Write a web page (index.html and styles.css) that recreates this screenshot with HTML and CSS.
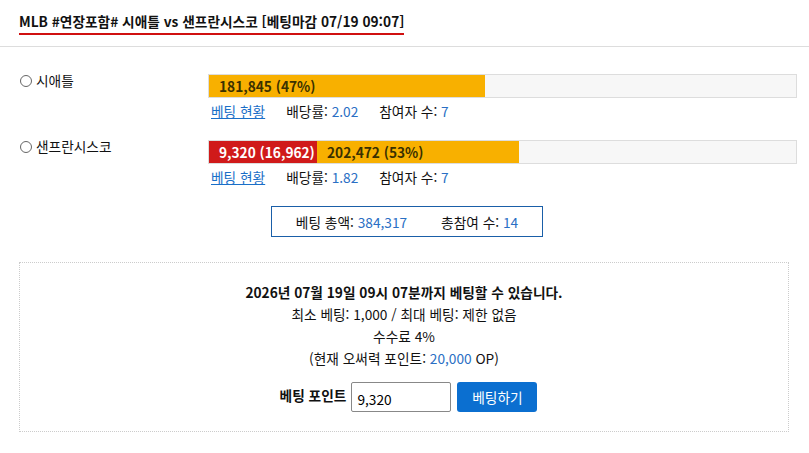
FILE: index.html
```html
<!DOCTYPE html>
<html lang="ko">

<head>
    <meta charset="UTF-8">
    <meta name="viewport" content="width=device-width, initial-scale=1.0">
    <title>MLB 베팅</title>
    <link rel="stylesheet" href="styles.css">
</head>

<body>
    <header class="head">
        <h3 class="title">MLB #연장포함# 시애틀 vs 샌프란시스코 [베팅마감 07/19 09:07]</h3>
    </header>

    <section class="options">
        <div class="option">
            <label class="pick"><span class="radio"></span>시애틀</label>
            <div class="info">
                <div class="bar">
                    <div class="fill orange" style="width: 47%">181,845 (47%)</div>
                </div>
                <div class="stats">
                    <a href="#">베팅 현황</a>
                    <span>배당률: <em>2.02</em></span>
                    <span>참여자 수: <em>7</em></span>
                </div>
            </div>
        </div>
        <div class="option">
            <label class="pick"><span class="radio"></span>샌프란시스코</label>
            <div class="info">
                <div class="bar">
                    <div class="fill red" style="width: 18.4%">9,320 (16,962)</div>
                    <div class="fill orange" style="width: 34.4%">202,472 (53%)</div>
                </div>
                <div class="stats">
                    <a href="#">베팅 현황</a>
                    <span>배당률: <em>1.82</em></span>
                    <span>참여자 수: <em>7</em></span>
                </div>
            </div>
        </div>
    </section>

    <div class="total">
        <span>베팅 총액: <em>384,317</em></span>
        <span>총참여 수: <em>14</em></span>
    </div>

    <section class="betbox">
        <p class="deadline">2026년 07월 19일 09시 07분까지 베팅할 수 있습니다.</p>
        <p>최소 베팅: 1,000 / 최대 베팅: 제한 없음</p>
        <p>수수료 4%</p>
        <p>(현재 오써력 포인트: <em>20,000</em> OP)</p>
        <div class="form">
            <span class="form-label">베팅 포인트</span>
            <input type="text" value="9,320">
            <button>베팅하기</button>
        </div>
    </section>
</body>

</html>
```

FILE: styles.css
```css
* {
    padding: 0;
    margin: 0;
    box-sizing: border-box;
}

body {
    font-family: "Noto Sans CJK KR", "Noto Sans", sans-serif;
    font-size: 13.7px;
    line-height: 18px;
    color: #111;
    background: #fff;
}

em {
    font-style: normal;
    color: #2a6fc4;
}

.head {
    padding: 11px 19px 0;
    border-bottom: 1px solid #ddd;
    height: 47px;
}

.title {
    display: inline-block;
    font-size: 13.7px;
    font-weight: 700;
    line-height: 20px;
    padding-bottom: 2px;
    border-bottom: 2px solid #d01010;
}

.options {
    padding: 27px 12px 0 19px;
}

.option {
    display: flex;
    margin-bottom: 20px;
}

.pick {
    width: 189px;
    display: flex;
    align-items: flex-start;
    line-height: 14px;
    margin-top: -1px;
}

.radio {
    width: 12px;
    height: 12px;
    border: 1px solid #666;
    border-radius: 50%;
    margin: 2px 4px 0 1px;
}

.info {
    flex: 1;
}

.bar {
    display: flex;
    height: 24px;
    border: 1px solid #ddd;
    background: #f7f7f7;
}

.fill {
    height: 22px;
    line-height: 22px;
    padding-left: 10px;
    font-weight: 700;
    white-space: nowrap;
    overflow: hidden;
}

.fill.orange {
    background: #f8b000;
    color: #3a3000;
}

.fill.red {
    background: #d01a1a;
    color: #fff;
}

.stats {
    display: flex;
    gap: 21px;
    padding: 4px 0 0 3px;
}

.stats a {
    color: #1a6fc8;
}

.total {
    width: 272px;
    height: 31px;
    margin: 0 auto 0 271px;
    border: 1px solid #1a5fa8;
    display: flex;
    justify-content: center;
    align-items: center;
    gap: 34px;
}

.betbox {
    margin: 25px 20px 0 19px;
    height: 170px;
    border: 1px dotted #ccc;
    text-align: center;
    padding-top: 18px;
}

.betbox p {
    line-height: 22px;
}

.betbox .deadline {
    font-weight: 700;
}

.form {
    display: flex;
    justify-content: center;
    align-items: flex-start;
    gap: 5px;
    margin-top: 13px;
    padding-left: 9px;
}

.form-label {
    font-weight: 700;
    line-height: 26px;
}

.form input {
    width: 100px;
    height: 30px;
    border: 1px solid #888;
    border-radius: 2px;
    padding: 4px 5px 0;
    font-family: inherit;
    font-size: 13.7px;
    outline: none;
}

.form button {
    width: 80px;
    height: 30px;
    border: none;
    border-radius: 3px;
    background: #0b6fd0;
    color: #fff;
    font-family: inherit;
    font-size: 13.7px;
    margin-left: 1px;
}
```
